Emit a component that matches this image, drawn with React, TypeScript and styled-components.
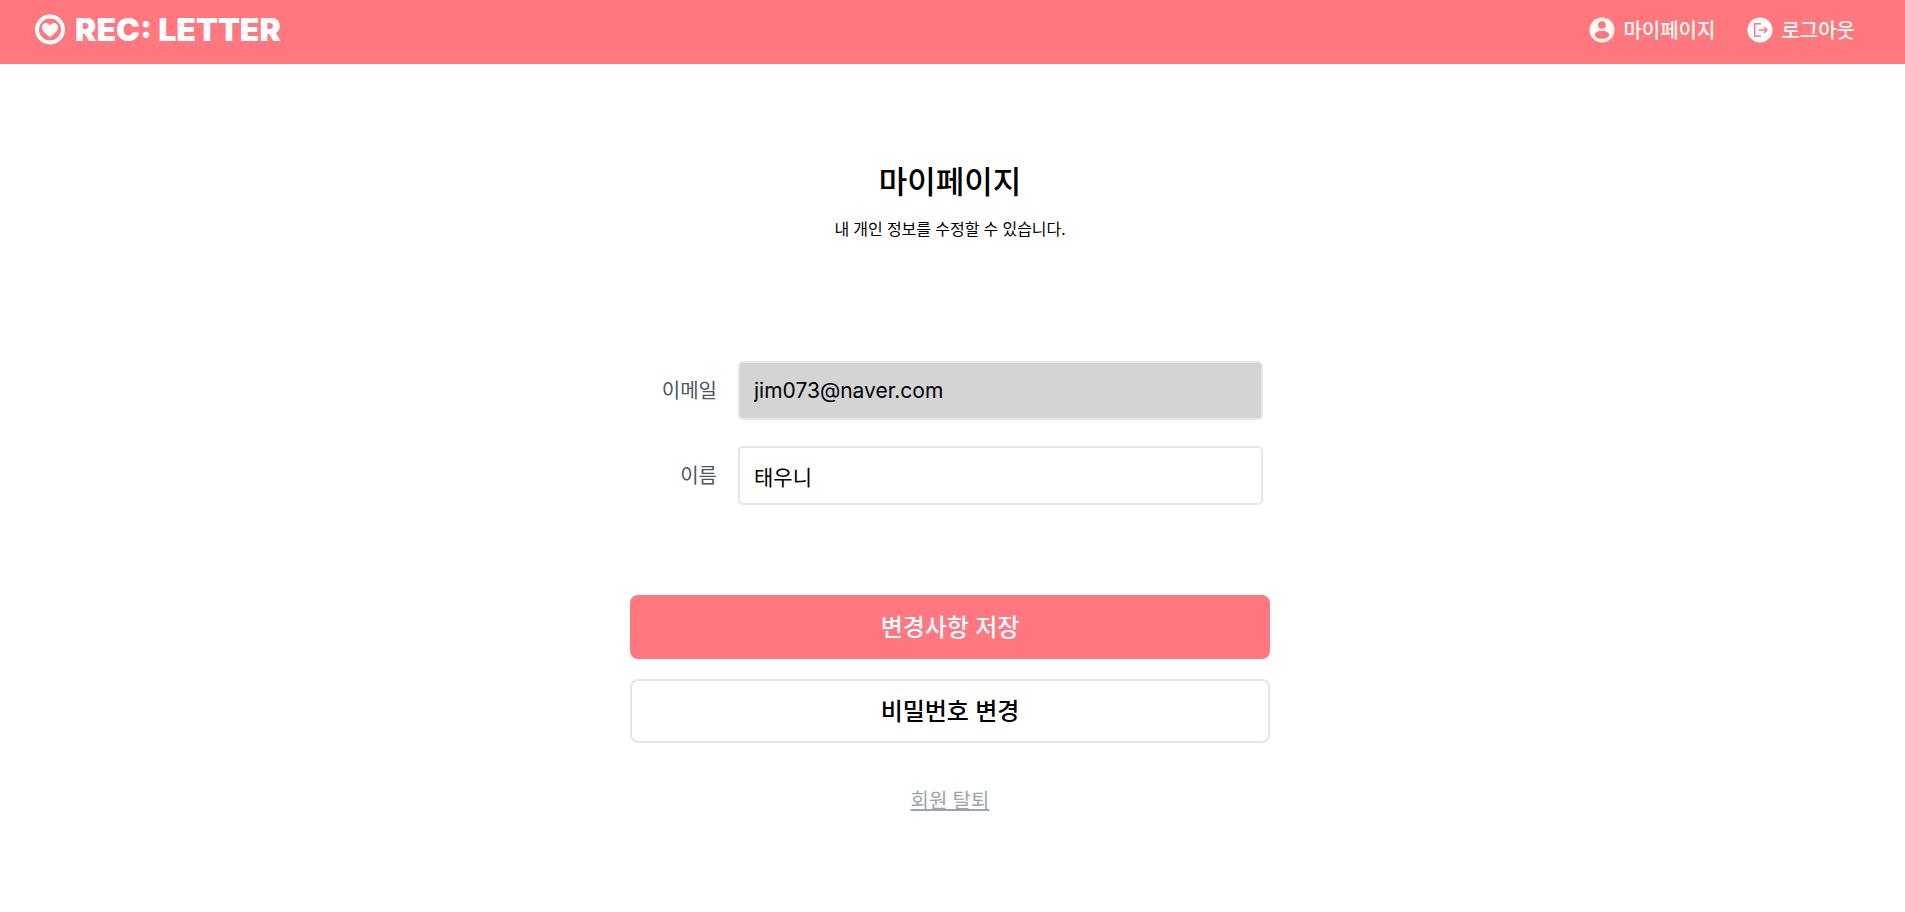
import React from "react";
import styled, { createGlobalStyle } from "styled-components";

const coral = "#ff777f";
const line = "#e5e5ea";

const GlobalStyle = createGlobalStyle`
  *, *::before, *::after { box-sizing: border-box; }
  body {
    margin: 0;
    background: #fff;
    color: #000;
    font-family: "Noto Sans", "Noto Sans CJK KR", sans-serif;
  }
  button, input { font-family: inherit; }
`;

const Header = styled.header`
  display: flex;
  align-items: center;
  justify-content: space-between;
  height: 64px;
  padding: 0 50px 5px 34px;
  background: ${coral};
`;

const Logo = styled.a`
  display: flex;
  align-items: center;
  gap: 9px;
  color: #fff;
  font: 900 32px/40px Inter, sans-serif;
  text-decoration: none;
`;

const Nav = styled.nav`
  display: flex;
  align-items: center;
  gap: 32px;
`;

const NavLink = styled.a`
  display: flex;
  align-items: center;
  gap: 8px;
  color: #fffaf0;
  font-family: "Noto Sans CJK KR", sans-serif;
  font-size: 20px;
  font-weight: 500;
  line-height: 28px;
  text-decoration: none;
`;

const Main = styled.main`
  display: flex;
  flex-direction: column;
  align-items: center;
  padding: 97px 21px 32px 16px;
`;

const Title = styled.h1`
  margin: 0;
  font-size: 31px;
  font-weight: 500;
  line-height: 40px;
`;

const Description = styled.p`
  margin: 16px 0 0;
  font-size: 16px;
  line-height: 24px;
`;

const Form = styled.form`
  display: flex;
  flex-direction: column;
  align-items: center;
  width: 100%;
  max-width: 640px;
  margin-top: 120px;
`;

const Fields = styled.div`
  display: flex;
  flex-direction: column;
  gap: 26px;
  width: 100%;
  padding-right: 7px;
`;

const Field = styled.div`
  display: grid;
  grid-template-columns: 87px 1fr;
  column-gap: 21px;
  align-items: center;
`;

const Label = styled.label`
  color: #4b5563;
  font-size: 20px;
  line-height: 28px;
  text-align: right;
`;

const TextInput = styled.input`
  width: 100%;
  height: 59px;
  padding: 0 14px;
  border: 2px solid ${line};
  border-radius: 5px;
  background: #fff;
  color: #000;
  font-family: Inter, "Noto Sans CJK KR", sans-serif;
  font-size: 21px;

  &:read-only { background: #d4d4d4; }
`;

const Actions = styled.div`
  display: flex;
  flex-direction: column;
  gap: 20px;
  width: 100%;
  margin-top: 90px;
`;

const ActionButton = styled.button<{ $primary?: boolean }>`
  height: 64px;
  padding: 0 16px 4px;
  border: 2px solid ${(p) => (p.$primary ? coral : line)};
  border-radius: 8px;
  background: ${(p) => (p.$primary ? coral : "#fff")};
  color: ${(p) => (p.$primary ? "#fff" : "#000")};
  font-size: 24px;
  font-weight: 500;
  cursor: pointer;
`;

const WithdrawLink = styled.a`
  margin-top: 44px;
  color: #9ca3af;
  font-size: 20px;
  line-height: 28px;
  text-decoration: underline;
  text-decoration-thickness: 2px;
`;

const HeartMark = () => (
  <svg width="32" height="32" viewBox="0 0 32 32" aria-hidden="true">
    <circle cx="16" cy="15.500" r="13" fill="none" stroke="#fff" strokeWidth="4" />
    <path
      fill="#fff"
      d="M16 23C12.500 20.300 8 17.300 8 13.200C8 10.700 9.800 9 12 9c1.700 0 3.200 1 4 2.400C16.800 10 18.300 9 20 9c2.200 0 4 1.700 4 4.200C24 17.300 19.500 20.300 16 23Z"
    />
  </svg>
);

const ProfileIcon = () => (
  <svg width="26" height="26" viewBox="0 0 26 26" aria-hidden="true">
    <circle cx="13" cy="13" r="12.5" fill="#fffaf0" />
    <circle cx="13" cy="8" r="3.800" fill={coral} />
    <ellipse cx="13" cy="17.800" rx="7.300" ry="4" fill={coral} />
  </svg>
);

const LogoutIcon = () => (
  <svg width="26" height="26" viewBox="0 0 26 26" aria-hidden="true">
    <circle cx="13" cy="13" r="12.5" fill="#fff" />
    <path d="M14 6.700H7.700V19.300H14M11.500 13H20M17 10l3 3-3 3" fill="none" stroke={coral} strokeWidth="1.500" />
  </svg>
);

export default function App() {
  return (
    <>
      <GlobalStyle />
      <Header>
        <Logo href="#">
          <HeartMark />
          REC: LETTER
        </Logo>
        <Nav>
          <NavLink href="#mypage">
            <ProfileIcon />
            마이페이지
          </NavLink>
          <NavLink href="#logout">
            <LogoutIcon />
            로그아웃
          </NavLink>
        </Nav>
      </Header>
      <Main>
        <Title>마이페이지</Title>
        <Description>내 개인 정보를 수정할 수 있습니다.</Description>
        <Form onSubmit={(e) => e.preventDefault()}>
          <Fields>
            <Field>
              <Label htmlFor="email">이메일</Label>
              <TextInput id="email" type="email" defaultValue="jim073@naver.com" readOnly />
            </Field>
            <Field>
              <Label htmlFor="name">이름</Label>
              <TextInput id="name" type="text" defaultValue="태우니" />
            </Field>
          </Fields>
          <Actions>
            <ActionButton type="submit" $primary>변경사항 저장</ActionButton>
            <ActionButton type="button">비밀번호 변경</ActionButton>
          </Actions>
        </Form>
        <WithdrawLink href="#withdraw">회원 탈퇴</WithdrawLink>
      </Main>
    </>
  );
}
